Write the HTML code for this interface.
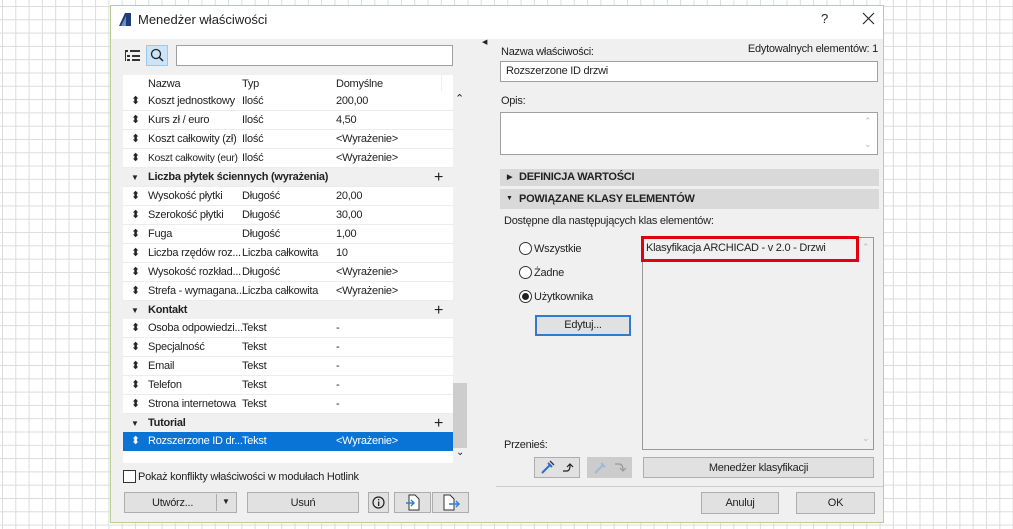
<!DOCTYPE html>
<html><head><meta charset="utf-8"><style>
*{margin:0;padding:0;box-sizing:border-box}
body{width:1013px;height:529px;overflow:hidden;position:relative;font-family:"Liberation Sans",sans-serif;font-size:11px;letter-spacing:-0.25px;color:#222;
background-color:#fff;background-image:linear-gradient(#dcdcdc 1px,transparent 1px),linear-gradient(90deg,#dcdcdc 1px,transparent 1px);background-size:13.3px 13.3px;background-position:2px 6px}
.a{position:absolute}
.dlg{left:110px;top:5px;width:774px;height:518px;background:#f0f0f0;border:1px solid #b8cf94}
.title{left:0;top:0;width:772px;height:33px;background:#fff}
.row{position:absolute;left:0;width:330px;height:19px;background:#fff;border-bottom:1px solid #ececec;line-height:19px}
.row span{position:absolute;white-space:nowrap}
.grp{background:#f0f0f0;font-weight:bold}
.btn{position:absolute;background:#e1e1e1;border:1px solid #adadad;text-align:center;line-height:20px;font-size:11px}
.inp{position:absolute;background:#fff;border:1px solid #a0a0a0}
.sec{position:absolute;left:500px;width:379px;height:17px;background:#d9d9d9;font-weight:bold;line-height:17px;padding-left:19px}
.radio{position:absolute;width:13px;height:13px;border:1px solid #333;border-radius:50%;background:#fff}
</style></head><body>
<div class="a dlg">
 <div class="a title"></div>
</div>
<svg class="a" style="left:118px;top:12px" width="14" height="15"><polygon points="1,14 7,1 13,1 13,14" fill="#1d3c78"/><polygon points="3,14 8,4 8,14" fill="#6d8fc4"/></svg>
<div class="a" style="left:138px;top:12px;font-size:13px;letter-spacing:0">Menedżer właściwości</div>
<div class="a" style="left:821px;top:11px;font-size:13px">?</div>
<svg class="a" style="left:862px;top:12px" width="13" height="13"><path d="M1 1L12 12M12 1L1 12" stroke="#222" stroke-width="1.1"/></svg>

<svg class="a" style="left:125px;top:50px" width="16" height="12"><g fill="#333"><rect x="0" y="0" width="3" height="2"/><rect x="5" y="0" width="10" height="2"/><rect x="2" y="5" width="3" height="2"/><rect x="7" y="5" width="8" height="2"/><rect x="2" y="9" width="3" height="2"/><rect x="7" y="9" width="8" height="2"/><rect x="0" y="2" width="1" height="9"/></g></svg>
<div class="a" style="left:146px;top:45px;width:22px;height:21px;background:#cce4f7;border:1px solid #99c9ef"></div>
<svg class="a" style="left:150px;top:48px" width="14" height="14"><circle cx="6" cy="6" r="4.5" fill="none" stroke="#222" stroke-width="1.3"/><line x1="9.3" y1="9.3" x2="13" y2="13" stroke="#222" stroke-width="1.5"/></svg>
<div class="inp" style="left:176px;top:45px;width:277px;height:21px"></div>

<div class="a" style="left:123px;top:75px;width:330px;height:388px;background:#fff;overflow:hidden">
 <div class="a" style="left:25px;top:3px">Nazwa</div><div class="a" style="left:119px;top:3px">Typ</div><div class="a" style="left:213px;top:3px">Domyślne</div>
 <div class="a" style="left:318px;top:0;width:1px;height:16px;background:#eee"></div>
</div>
<div class="a" style="left:123px;top:92px;width:330px">
<div class="row" style="top:0"><span style="left:8px">⬍</span><span style="left:25px">Koszt jednostkowy</span><span style="left:119px">Ilość</span><span style="left:213px">200,00</span></div>
<div class="row" style="top:19px"><span style="left:8px">⬍</span><span style="left:25px">Kurs zł / euro</span><span style="left:119px">Ilość</span><span style="left:213px">4,50</span></div>
<div class="row" style="top:38px"><span style="left:8px">⬍</span><span style="left:25px">Koszt całkowity (zł)</span><span style="left:119px">Ilość</span><span style="left:213px">&lt;Wyrażenie&gt;</span></div>
<div class="row" style="top:57px"><span style="left:8px">⬍</span><span style="left:25px;font-size:10.3px">Koszt całkowity (eur)</span><span style="left:119px">Ilość</span><span style="left:213px">&lt;Wyrażenie&gt;</span></div>
<div class="row grp" style="top:76px"><span style="left:8px;font-size:8px">▼</span><span style="left:25px">Liczba płytek ściennych (wyrażenia)</span><span style="left:311px;font-weight:normal;font-size:16px">+</span></div>
<div class="row" style="top:95px"><span style="left:8px">⬍</span><span style="left:25px">Wysokość płytki</span><span style="left:119px">Długość</span><span style="left:213px">20,00</span></div>
<div class="row" style="top:114px"><span style="left:8px">⬍</span><span style="left:25px">Szerokość płytki</span><span style="left:119px">Długość</span><span style="left:213px">30,00</span></div>
<div class="row" style="top:133px"><span style="left:8px">⬍</span><span style="left:25px">Fuga</span><span style="left:119px">Długość</span><span style="left:213px">1,00</span></div>
<div class="row" style="top:152px"><span style="left:8px">⬍</span><span style="left:25px">Liczba rzędów roz...</span><span style="left:119px">Liczba całkowita</span><span style="left:213px">10</span></div>
<div class="row" style="top:171px"><span style="left:8px">⬍</span><span style="left:25px">Wysokość rozkład...</span><span style="left:119px">Długość</span><span style="left:213px">&lt;Wyrażenie&gt;</span></div>
<div class="row" style="top:190px"><span style="left:8px">⬍</span><span style="left:25px">Strefa - wymagana...</span><span style="left:119px">Liczba całkowita</span><span style="left:213px">&lt;Wyrażenie&gt;</span></div>
<div class="row grp" style="top:209px"><span style="left:8px;font-size:8px">▼</span><span style="left:25px">Kontakt</span><span style="left:311px;font-weight:normal;font-size:16px">+</span></div>
<div class="row" style="top:227px"><span style="left:8px">⬍</span><span style="left:25px">Osoba odpowiedzi...</span><span style="left:119px">Tekst</span><span style="left:213px">-</span></div>
<div class="row" style="top:246px"><span style="left:8px">⬍</span><span style="left:25px">Specjalność</span><span style="left:119px">Tekst</span><span style="left:213px">-</span></div>
<div class="row" style="top:265px"><span style="left:8px">⬍</span><span style="left:25px">Email</span><span style="left:119px">Tekst</span><span style="left:213px">-</span></div>
<div class="row" style="top:284px"><span style="left:8px">⬍</span><span style="left:25px">Telefon</span><span style="left:119px">Tekst</span><span style="left:213px">-</span></div>
<div class="row" style="top:303px"><span style="left:8px">⬍</span><span style="left:25px">Strona internetowa</span><span style="left:119px">Tekst</span><span style="left:213px">-</span></div>
<div class="row grp" style="top:322px"><span style="left:8px;font-size:8px">▼</span><span style="left:25px">Tutorial</span><span style="left:311px;font-weight:normal;font-size:16px">+</span></div>
<div class="row" style="top:340px;background:#0a74d6;color:#fff;border:none"><span style="left:8px">⬍</span><span style="left:25px">Rozszerzone ID dr...</span><span style="left:119px">Tekst</span><span style="left:213px">&lt;Wyrażenie&gt;</span></div>
</div>
<div class="a" style="left:455px;top:92px;font-size:11px">⌃</div>
<div class="a" style="left:453px;top:383px;width:14px;height:65px;background:#cdcdcd"></div>
<div class="a" style="left:456px;top:447px;font-size:10px">⌄</div>

<div class="a" style="left:123px;top:470px;width:13px;height:13px;border:1px solid #333;background:#fff"></div>
<div class="a" style="left:138px;top:471px">Pokaż konflikty właściwości w modułach Hotlink</div>

<div class="btn" style="left:124px;top:492px;width:113px;height:21px;text-align:left;padding-left:27px">Utwórz...</div>
<div class="a" style="left:216px;top:494px;width:1px;height:17px;background:#adadad"></div>
<div class="a" style="left:222px;top:497px;font-size:8px">▼</div>
<div class="btn" style="left:247px;top:492px;width:112px;height:21px">Usuń</div>
<div class="btn" style="left:368px;top:492px;width:21px;height:21px"></div>
<svg class="a" style="left:372px;top:496px" width="13" height="13"><circle cx="6.5" cy="6.5" r="5.5" fill="none" stroke="#222" stroke-width="1.2"/><rect x="6" y="5.5" width="1.3" height="4.5" fill="#222"/><rect x="6" y="3" width="1.3" height="1.3" fill="#222"/></svg>
<div class="btn" style="left:394px;top:492px;width:37px;height:21px"></div>
<svg class="a" style="left:405px;top:494px" width="16" height="17"><path d="M4 1h6l4 4v11H4z" fill="#fff" stroke="#333"/><path d="M1 9h8M6 6l3 3-3 3" fill="none" stroke="#2c7fd6" stroke-width="1.4"/></svg>
<div class="btn" style="left:432px;top:492px;width:37px;height:21px"></div>
<svg class="a" style="left:442px;top:494px" width="18" height="17"><path d="M2 1h6l4 4v11H2z" fill="#fff" stroke="#333"/><path d="M7 10h10M14 7l3 3-3 3" fill="none" stroke="#2c7fd6" stroke-width="1.4"/></svg>

<div class="a" style="left:482px;top:38px;font-size:7px">◀</div>

<div class="a" style="left:501px;top:46px">Nazwa właściwości:</div>
<div class="a" style="left:700px;width:178px;text-align:right;top:43px">Edytowalnych elementów: 1</div>
<div class="inp" style="left:500px;top:61px;width:378px;height:21px;padding:3px 5px">Rozszerzone ID drzwi</div>
<div class="a" style="left:501px;top:95px">Opis:</div>
<div class="inp" style="left:500px;top:112px;width:378px;height:43px"></div>
<div class="a" style="left:864px;top:116px;color:#bbb;font-size:9px">⌃</div>
<div class="a" style="left:864px;top:139px;color:#bbb;font-size:9px">⌄</div>
<div class="sec" style="top:169px"><span class="a" style="left:7px;font-size:7px">▶</span>DEFINICJA WARTOŚCI</div>
<div class="sec" style="top:189px;height:20px;line-height:20px"><span class="a" style="left:6px;font-size:7px">▼</span>POWIĄZANE KLASY ELEMENTÓW</div>
<div class="a" style="left:504px;top:215px">Dostępne dla następujących klas elementów:</div>
<div class="radio" style="left:519px;top:242px"></div><div class="a" style="left:534px;top:243px">Wszystkie</div>
<div class="radio" style="left:519px;top:266px"></div><div class="a" style="left:534px;top:267px">Żadne</div>
<div class="radio" style="left:519px;top:290px"><div class="a" style="left:2px;top:2px;width:7px;height:7px;border-radius:50%;background:#222"></div></div><div class="a" style="left:534px;top:291px">Użytkownika</div>
<div class="btn" style="left:535px;top:315px;width:96px;height:21px;border:2px solid #2f7bd3;line-height:17px">Edytuj...</div>
<div class="a" style="left:642px;top:237px;width:232px;height:213px;background:#f0f0f0;border:1px solid #999"></div>
<div class="a" style="left:641px;top:236px;width:218px;height:26px;border:3px solid #e00010"></div>
<div class="a" style="left:646px;top:242px">Klasyfikacja ARCHICAD - v 2.0 - Drzwi</div>
<div class="a" style="left:862px;top:242px;color:#bbb;font-size:9px">⌃</div>
<div class="a" style="left:862px;top:433px;color:#bbb;font-size:9px">⌄</div>
<div class="a" style="left:504px;top:439px">Przenieś:</div>
<div class="btn" style="left:534px;top:457px;width:46px;height:21px"></div>
<svg class="a" style="left:540px;top:459px" width="36" height="16"><path d="M2 14l8-8M8 4l4 4" stroke="#2a6fc9" stroke-width="2"/><path d="M10 2l4 4" stroke="#333" stroke-width="1.3"/><path d="M23 12h4q3 0 3-6M27 8l3-3 3 3" fill="none" stroke="#222" stroke-width="1.2"/></svg>
<div class="a" style="left:587px;top:457px;width:45px;height:21px;background:#cccccc"></div>
<svg class="a" style="left:593px;top:459px" width="36" height="16"><path d="M2 14l8-8M8 4l4 4" stroke="#9fb8d8" stroke-width="2"/><path d="M22 5h4q4 0 4 6M27 9l3 3 3-3" fill="none" stroke="#999" stroke-width="1.2"/></svg>
<div class="btn" style="left:643px;top:457px;width:231px;height:21px">Menedżer klasyfikacji</div>
<div class="a" style="left:496px;top:486px;width:387px;height:1px;background:#ccc"></div>
<div class="btn" style="left:701px;top:492px;width:78px;height:22px">Anuluj</div>
<div class="btn" style="left:796px;top:492px;width:79px;height:22px">OK</div>
</body></html>
